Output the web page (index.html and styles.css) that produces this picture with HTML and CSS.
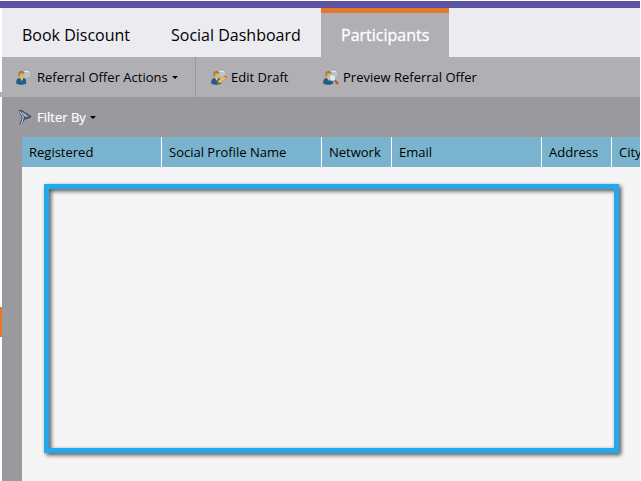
FILE: index.html
```
<!DOCTYPE html>
<html lang="en">
<head>
<meta charset="utf-8">
<title>Participants</title>
<link rel="stylesheet" href="styles.css">
</head>
<body>
<svg class="defs" width="0" height="0">
  <defs>
    <g id="person">
      <ellipse cx="10.500" cy="5.200" rx="5" ry="4.500" fill="#b9c4cb" stroke="#929da5" stroke-width=".7"/>
      <path d="M7.500 3.500Q10 .8 13 3" fill="none" stroke="#dfe7ea" stroke-width="1.200"/>
      <path d="M.7 14.500V12Q1 9.500 4 9.200h2.500Q9.700 9.500 9.800 12v2.500Q5 16.500.7 14.500z" fill="#23608f" stroke="#174365" stroke-width=".6"/>
      <path d="M4 9h3l-1 3z" fill="#e8d5b2"/>
      <ellipse cx="5.600" cy="6.200" rx="2.800" ry="3.500" fill="#e3b365"/>
      <path d="M2.600 7Q1.500 2 5.500 2 8.500 1.800 8.600 4.500 6 4.500 4.500 4.300L3.600 8z" fill="#a07c3c"/>
    </g>
  </defs>
</svg>
<div class="app">
  <aside class="rail"><div class="rail-split"></div><div class="rail-active"></div></aside>
  <main class="main">
    <nav class="tabs">
      <a class="tab tab-first">Book Discount</a>
      <a class="tab tab-second">Social Dashboard</a>
      <a class="tab tab-active">Participants</a>
    </nav>
    <div class="toolbar">
      <div class="tool tool-actions">
        <svg class="icon" viewBox="0 0 16 16"><use href="#person"/></svg>
        <span>Referral Offer Actions</span><i class="caret"></i>
      </div>
      <div class="tool tool-edit">
        <svg class="icon" viewBox="0 0 16 16"><use href="#person"/><path d="M6.500 14.500l1-3 5.500-4.500 2.200 2.200-5.700 4.500z" fill="#edc54b" stroke="#b08d3d" stroke-width=".5"/><path d="M13 7l1-.8 2 2-.8 1z" fill="#c75b55"/><path d="M6.500 14.500l.5-1.500 1 1.200z" fill="#444"/></svg>
        <span>Edit Draft</span>
      </div>
      <div class="tool">
        <svg class="icon" viewBox="0 0 16 16"><use href="#person"/><path d="M11.500 11l3.500 4" stroke="#a45e2e" stroke-width="2"/><circle cx="9.500" cy="8.800" r="3.200" fill="#dbeaf6" stroke="#9aabb9" stroke-width=".8"/></svg>
        <span>Preview Referral Offer</span>
      </div>
    </div>
    <div class="filter">
      <svg class="icon" viewBox="0 0 16 16"><path d="M1.500 1.300Q3 .3 5 1.300L14.300 7Q14.500 8.700 12.500 9.200L8 10.500 6 13.500 2.800 15.500 2.500 14.500 4.800 9z" fill="#3f5067"/><path d="M2.800 2.200l3.500 5.800-1 4.500-1.500 1.700" fill="none" stroke="#c6d2de" stroke-width="1.100"/><path d="M5 2.500l7.500 5-4 .8z" fill="#8597ab"/><path d="M5.500 3.500l3.200 4.200" stroke="#e3eaf0" stroke-width=".9"/></svg>
      <span>Filter By</span><i class="caret"></i>
    </div>
    <div class="grid">
      <div class="grid-head">
        <div>Registered</div><div>Social Profile Name</div><div>Network</div><div>Email</div><div>Address</div><div>City</div>
      </div>
      <div class="grid-body"><div class="highlight"></div></div>
    </div>
  </main>
</div>
</body>
</html>
```
FILE: styles.css
```
* { box-sizing: border-box; }
body {
  margin: 0;
  background: #fff;
  font: 13px "Open Sans", "Noto Sans", sans-serif;
  color: #000;
  overflow: hidden;
}
.defs { display: block; }
.app {
  display: flex;
  width: 640px;
  height: 480px;
  margin-top: 1px;
  border-top: 7px solid #5b53a2;
}
.rail { width: 2px; flex: none; }
.rail-split { height: 5px; margin-top: 84px; background: #b0afb4; }
.rail-active { height: 30px; margin-top: 210px; background: #e8762d; }
.main {
  flex: 1;
  min-width: 0;
  display: flex;
  flex-direction: column;
  background: #9a999e;
}
.tabs { display: flex; height: 49px; background: #ecebf0; }
.tab {
  padding-left: 20px;
  font-size: 16px;
  line-height: 54px;
  white-space: nowrap;
}
.tab-first { width: 149px; }
.tab-second { width: 170px; }
.tab-active {
  width: 128px;
  border-top: 5px solid #e8762d;
  background: #b0afb4;
  color: #fff;
  line-height: 44px;
  -webkit-text-stroke: .3px #fff;
}
.toolbar { display: flex; height: 40px; background: #b0afb4; }
.tool {
  display: flex;
  align-items: center;
  padding-left: 15px;
  white-space: nowrap;
}
.tool-actions { width: 194px; border-right: 1px solid #99989d; padding-left: 14px; }
.tool-edit { width: 112px; padding-left: 15px; }
.icon { width: 16px; height: 16px; margin-right: 4px; flex: none; }
.tool-actions .icon { margin-right: 5px; }
.caret {
  margin-left: 4px;
  border: 3px solid transparent;
  border-top-color: #000;
  border-bottom: 0;
}
.filter {
  display: flex;
  align-items: center;
  height: 40px;
  padding-left: 15px;
  color: #fff;
}
.filter span { -webkit-text-stroke: .2px #fff; }
.grid {
  flex: 1;
  display: flex;
  flex-direction: column;
  margin-left: 20px;
  background: #f5f5f5;
  overflow: hidden;
}
.grid-head {
  display: grid;
  grid-template-columns: 140px 160px 70px 150px 70px 70px;
  height: 30px;
  background: #7ab3cd;
  line-height: 30px;
}
.grid-head div { padding-left: 7px; border-right: 1px solid #fff; white-space: nowrap; }
.grid-body { flex: 1; padding: 17px 21px 28px 22px; display: flex; }
.highlight {
  flex: 1;
  border: 5px solid #24a9ec;
  filter: drop-shadow(2px 2px 2px rgba(0, 0, 0, .7));
}
```
